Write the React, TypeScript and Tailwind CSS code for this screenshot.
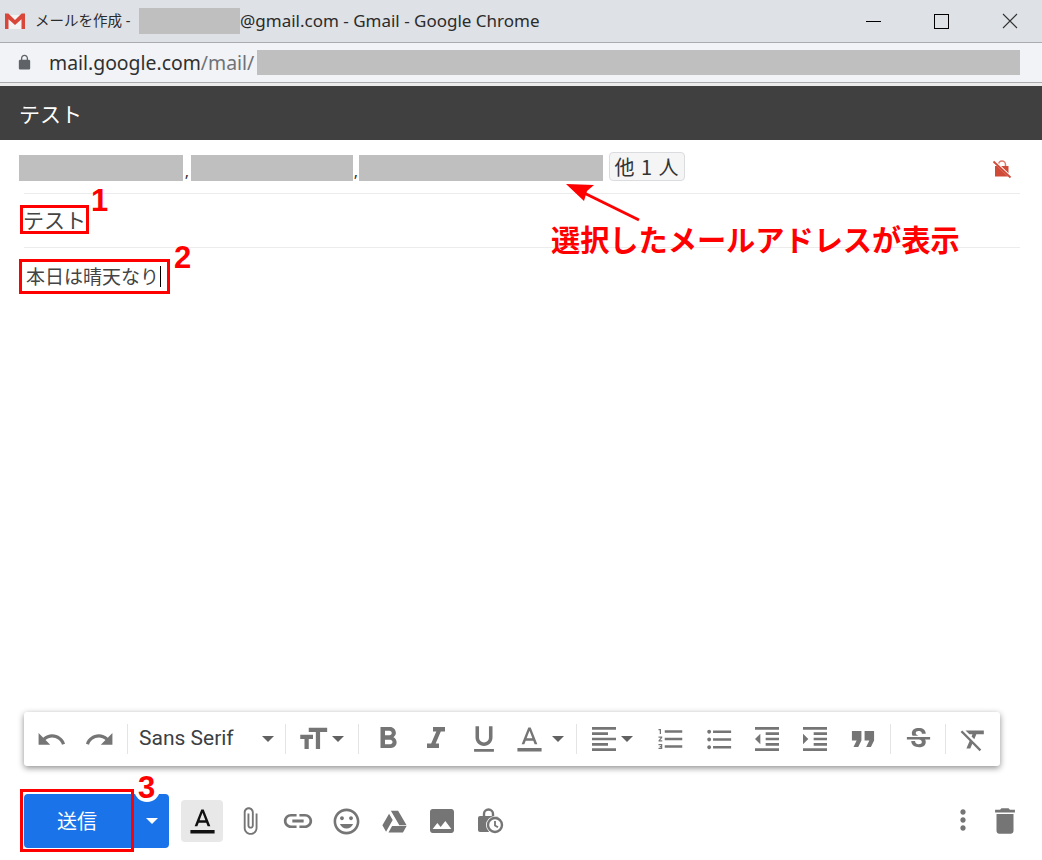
const ui = '"Noto Sans", "Noto Sans CJK JP", sans-serif'
const jp = '"Noto Sans CJK JP", sans-serif'

const paths = {
  undo: 'M12.5 8c-2.65 0-5.05.99-6.9 2.6L2 7v9h9l-3.62-3.62c1.39-1.16 3.16-1.88 5.12-1.88 3.54 0 6.55 2.31 7.6 5.5l2.37-.78C21.08 11.03 17.15 8 12.5 8z',
  redo: 'M18.4 10.6C16.55 8.99 14.15 8 11.5 8c-4.65 0-8.58 3.03-9.96 7.22L3.9 16c1.05-3.19 4.05-5.5 7.6-5.5 1.95 0 3.73.72 5.12 1.88L13 16h9V7l-3.6 3.6z',
  size: 'M9 4v3h5v12h3V7h5V4H9zm-6 8h3v7h3v-7h3V9H3v3z',
  bold: 'M15.6 10.79c.97-.67 1.65-1.77 1.65-2.79 0-2.26-1.75-4-4-4H7v14h7.04c2.09 0 3.71-1.7 3.71-3.79 0-1.52-.86-2.82-2.15-3.42zM10 6.5h3c.83 0 1.5.67 1.5 1.5s-.67 1.5-1.5 1.5h-3v-3zm3.5 9H10v-3h3.5c.83 0 1.5.67 1.5 1.5s-.67 1.5-1.5 1.5z',
  italic: 'M10 4v3h2.21l-3.42 8H6v3h8v-3h-2.21l3.42-8H18V4z',
  underline: 'M12 17c3.31 0 6-2.69 6-6V3h-2.5v8c0 1.93-1.57 3.5-3.5 3.5S8.5 12.93 8.5 11V3H6v8c0 3.31 2.69 6 6 6zm-7 2v2h14v-2H5z',
  color: 'M11 2L5.500 16h2.250l1.120-3h6.250l1.120 3h2.250L13 2h-2zm-1.380 9L12 4.670 14.380 11H9.620zM2 19h20v3H2z',
  align: 'M15 15H3v2h12v-2zm0-8H3v2h12V7zM3 13h18v-2H3v2zm0 8h18v-2H3v2zM3 3v2h18V3H3z',
  numbered: 'M2 17h2v.5H3v1h1v.5H2v1h3v-4H2v1zm1-9h1V4H2v1h1v3zm-1 3h1.8L2 13.1v.9h3v-1H3.2L5 10.9V10H2v1zm5-6v2h14V5H7zm0 14h14v-2H7v2zm0-6h14v-2H7v2z',
  bulleted: 'M4 10.5c-.83 0-1.5.67-1.5 1.5s.67 1.5 1.5 1.5 1.5-.67 1.5-1.5-.67-1.5-1.5-1.5zm0-6c-.83 0-1.5.67-1.5 1.5S3.17 7.5 4 7.5 5.5 6.83 5.5 6 4.83 4.5 4 4.5zm0 12c-.83 0-1.5.68-1.5 1.5s.68 1.5 1.5 1.5 1.5-.68 1.5-1.5-.67-1.5-1.5-1.5zM7 19h14v-2H7v2zm0-6h14v-2H7v2zm0-8v2h14V5H7z',
  outdent: 'M11 17h10v-2H11v2zm-8-5l4 4V8l-4 4zm0 9h18v-2H3v2zM3 3v2h18V3H3zm8 6h10V7H11v2zm0 4h10v-2H11v2z',
  indent: 'M3 21h18v-2H3v2zM3 8v8l4-4-4-4zm8 9h10v-2H11v2zM3 3v2h18V3H3zm8 6h10V7H11v2zm0 4h10v-2H11v2z',
  quote: 'M6 17h3l2-4V7H5v6h3zm8 0h3l2-4V7h-6v6h3z',
  strike: 'M7.24 8.75c-.26-.48-.39-1.03-.39-1.67 0-.61.13-1.16.4-1.67.26-.5.63-.93 1.11-1.29.48-.35 1.05-.63 1.7-.83.66-.19 1.39-.29 2.18-.29.81 0 1.54.11 2.21.34.66.22 1.23.54 1.69.94.47.4.83.88 1.08 1.43.25.55.38 1.15.38 1.81h-3.01c0-.31-.05-.59-.15-.85-.09-.27-.24-.49-.44-.68-.2-.19-.45-.33-.75-.44-.3-.1-.66-.16-1.06-.16-.39 0-.74.04-1.03.13-.29.09-.53.21-.72.36-.19.16-.34.34-.44.55-.1.21-.15.43-.15.66 0 .48.25.88.74 1.21.38.25.77.48 1.41.7H7.39c-.05-.08-.11-.17-.15-.25zM21 12v-2H3v2h9.62c.18.07.4.14.55.2.37.17.66.34.87.51.21.17.35.36.43.57.07.2.11.43.11.69 0 .23-.05.45-.14.66-.09.2-.23.38-.42.53-.19.15-.42.26-.71.35-.29.08-.63.13-1.01.13-.43 0-.83-.04-1.18-.13s-.66-.23-.91-.42c-.25-.19-.45-.44-.59-.75-.14-.31-.25-.76-.25-1.21H6.4c0 .55.08 1.13.24 1.58.16.45.37.85.65 1.21.28.35.6.66.98.92.37.26.78.48 1.22.65.44.17.9.3 1.38.39.48.08.96.13 1.44.13.8 0 1.53-.09 2.18-.28s1.21-.45 1.67-.79c.46-.34.82-.77 1.07-1.27s.38-1.07.38-1.71c0-.6-.1-1.14-.31-1.61-.05-.11-.11-.23-.17-.33H21z',
  clear: 'M3.27 5L2 6.27l6.97 6.97L6.5 19h3l1.57-3.66L16.73 21 18 19.73 3.55 5.27 3.27 5zM6 5v.18L8.82 8h2.4l-.72 1.68 2.1 2.1L14.21 8H20V5H6z',
  clip: 'M16.5 6v11.5c0 2.21-1.79 4-4 4s-4-1.79-4-4V5c0-1.38 1.12-2.5 2.5-2.5s2.5 1.12 2.5 2.5v10.5c0 .55-.45 1-1 1s-1-.45-1-1V6H10v9.5c0 1.38 1.12 2.5 2.5 2.5s2.5-1.12 2.5-2.5V5c0-2.21-1.79-4-4-4S7 2.79 7 5v12.5c0 3.04 2.46 5.5 5.5 5.5s5.5-2.46 5.5-5.5V6h-1.5z',
  link: 'M3.9 12c0-1.71 1.39-3.1 3.1-3.1h4V7H7c-2.76 0-5 2.24-5 5s2.24 5 5 5h4v-1.9H7c-1.71 0-3.1-1.39-3.1-3.1zM8 13h8v-2H8v2zm9-6h-4v1.9h4c1.71 0 3.1 1.39 3.1 3.1s-1.39 3.1-3.1 3.1h-4V17h4c2.76 0 5-2.24 5-5s-2.24-5-5-5z',
  emoji: 'M11.99 2C6.47 2 2 6.48 2 12s4.47 10 9.99 10C17.52 22 22 17.52 22 12S17.52 2 11.99 2zM12 20c-4.42 0-8-3.58-8-8s3.58-8 8-8 8 3.58 8 8-3.58 8-8 8zm3.5-9c.83 0 1.5-.67 1.5-1.5S16.33 8 15.5 8 14 8.67 14 9.5s.67 1.5 1.5 1.5zm-7 0c.83 0 1.5-.67 1.5-1.5S9.33 8 8.5 8 7 8.67 7 9.5 7.67 11 8.5 11zm3.5 6.5c2.33 0 4.31-1.46 5.11-3.5H6.89c.8 2.04 2.78 3.5 5.11 3.5z',
  drive: 'M9 3h6l7 12h-6L9 3zM7.500 5.500l3 5.200L5 20.500 2 15l5.500-9.500zM7 21l3-5.300h12L19 21H7z',
  image: 'M21 19V5c0-1.1-.9-2-2-2H5c-1.1 0-2 .9-2 2v14c0 1.1.9 2 2 2h14c1.1 0 2-.9 2-2zM8.5 13.5l2.5 3.01L14.5 12l4.5 6H5l3.5-4.5z',
  more: 'M12 8c1.1 0 2-.9 2-2s-.9-2-2-2-2 .9-2 2 .9 2 2 2zm0 2c-1.1 0-2 .9-2 2s.9 2 2 2 2-.9 2-2-.9-2-2-2zm0 6c-1.1 0-2 .9-2 2s.9 2 2 2 2-.9 2-2-.9-2-2-2z',
  trash: 'M6 19c0 1.1.9 2 2 2h8c1.1 0 2-.9 2-2V7H6v12zM19 4h-3.5l-1-1h-5l-1 1H5v2h14V4z',
}

function Icon({ d, size = 24, className = 'fill-[#757575]' }: { d: string; size?: number; className?: string }) {
  return (
    <svg width={size} height={size} viewBox="0 0 24 24" className={`shrink-0 ${className}`}>
      <path d={d} />
    </svg>
  )
}

function Tool({ d, size = 26 }: { d: string; size?: number }) {
  return (
    <div className="flex h-12 w-12 shrink-0 items-center justify-center">
      <Icon d={d} size={size} />
    </div>
  )
}

function Caret({ className = 'border-t-[#616161]' }: { className?: string }) {
  return <div className={`h-0 w-0 border-x-[6px] border-t-[6px] border-x-transparent ${className}`} />
}

function Sep() {
  return <div className="h-[30px] w-px shrink-0 bg-[#e4e4e4]" />
}

function Redacted({ className }: { className: string }) {
  return <div className={`shrink-0 bg-[#bfbfbf] ${className}`} />
}

function GmailLogo() {
  return (
    <svg width="22" height="18" viewBox="0 0 22 18" className="-ml-[1px] shrink-0">
      <path d="M3 3h16v14H3z" fill="#f4f4f4" />
      <path d="M1 1.500h3.400L11 8l6.600-6.500H21V17h-3.500V7.200L11 13 4.500 7.200V17H1z" fill="#d9473a" />
    </svg>
  )
}

function TitleBar() {
  return (
    <div className="flex h-[43px] shrink-0 items-center border-b border-[#a9abad] bg-[#dee1e6] pl-[5px] text-[17px] text-[#2b2b2b]" style={{ fontFamily: ui }}>
      <GmailLogo />
      <span className="ml-[9px] w-[104px] shrink-0 whitespace-nowrap text-[14.5px]">メールを作成 -</span>
      <Redacted className="h-[26px] w-[101px]" />
      <span className="whitespace-nowrap">@gmail.com - Gmail - Google Chrome</span>
      <div className="ml-auto flex items-center pr-[24px]">
        <div className="h-px w-[15px] bg-black" />
        <div className="ml-[53px] h-[15px] w-[15px] border border-black" />
        <svg width="16" height="16" viewBox="0 0 16 16" className="ml-[53px] stroke-[#333333]">
          <path d="M1 1l14 14M15 1L1 15" fill="none" strokeWidth="1.100" />
        </svg>
      </div>
    </div>
  )
}

function AddressBar() {
  return (
    <div className="flex h-[40px] shrink-0 items-center border-b border-[#a9abad] bg-[#f1f3f6] pl-[16px] pr-[22px] text-[#303030]" style={{ fontFamily: ui }}>
      <Icon d="M18 8h-1V6c0-2.760-2.240-5-5-5S7 3.240 7 6v2H6c-1.100 0-2 .9-2 2v10c0 1.100.9 2 2 2h12c1.100 0 2-.9 2-2V10c0-1.100-.9-2-2-2zm-2.900 0H8.900V6c0-1.710 1.390-3.100 3.100-3.100 1.710 0 3.100 1.390 3.100 3.100v2z" size={17} className="fill-[#5f6368]" />
      <span className="ml-[16px] whitespace-nowrap text-[19.400px]">
        mail.google.com<span className="text-[#6f7276]">/mail/</span>
      </span>
      <Redacted className="ml-auto h-[25px] w-[763px]" />
    </div>
  )
}

function Recipients() {
  return (
    <div className="flex items-end pl-[19px] pr-[30px] pt-[12px] text-[#333333]" style={{ fontFamily: ui }}>
      <Redacted className="h-[26px] w-[164px]" />
      <span className="w-[8px] text-center text-[16px] leading-[20px]">,</span>
      <Redacted className="h-[26px] w-[162px]" />
      <span className="w-[6px] text-center text-[16px] leading-[20px]">,</span>
      <Redacted className="h-[26px] w-[244px]" />
      <div className="ml-[6px] flex h-[29px] w-[76px] items-center justify-center whitespace-nowrap rounded-[4px] border border-[#dadce0] bg-[#f5f5f5] text-[20px] tracking-[1px] text-[#333333]" style={{ fontFamily: jp }}>
        他 1 人
      </div>
      <div className="ml-auto mb-[2px]">
        <svg width="20" height="20" viewBox="0 0 20 20">
          <path d="M6.500 7V5.500a3.500 3.500 0 0 1 7 0V7" fill="none" stroke="#e0796c" strokeWidth="1.500" />
          <path d="M3 7h13.500v10.500H3z" fill="#d04a38" />
          <path d="M2.500 2.500l16 15.500" stroke="#ffffff" strokeWidth="2.800" />
          <path d="M1.500 2.500l17 16" stroke="#d04a38" strokeWidth="1.800" />
        </svg>
      </div>
    </div>
  )
}

function Toolbar() {
  return (
    <div className="mx-[24px] flex h-[54px] w-[976px] shrink-0 items-center rounded-[3px] bg-white pl-[3px] shadow-[0_2px_6px_rgba(0,0,0,0.45)]">
      <Tool d={paths.undo} size={31} />
      <Tool d={paths.redo} size={31} />
      <div className="ml-[4px]"><Sep /></div>
      <div className="flex w-[157px] shrink-0 items-center pl-[11px] pr-[11px] text-[21px] text-[#3c4043]" style={{ fontFamily: 'Roboto, sans-serif' }}>
        Sans Serif
        <div className="ml-auto"><Caret /></div>
      </div>
      <Sep />
      <div className="flex w-[72px] shrink-0 items-center pl-[10px]">
        <Icon d={paths.size} size={34} />
        <div className="ml-[2px]"><Caret /></div>
      </div>
      <Sep />
      <div className="ml-[5px] flex">
        <Tool d={paths.bold} size={36} />
        <Tool d={paths.italic} size={36} />
        <Tool d={paths.underline} size={34} />
      </div>
      <div className="flex w-[68px] shrink-0 items-center pl-[7px]">
        <Icon d={paths.color} size={29} />
        <div className="ml-[8px]"><Caret /></div>
      </div>
      <Sep />
      <div className="flex w-[70px] shrink-0 items-center pl-[11px]">
        <Icon d={paths.align} size={32} />
        <div className="ml-[1px]"><Caret /></div>
      </div>
      <Tool d={paths.numbered} size={30} />
      <Tool d={paths.bulleted} size={31} />
      <Tool d={paths.outdent} size={32} />
      <Tool d={paths.indent} size={32} />
      <Tool d={paths.quote} size={38} />
      <div className="ml-[3px]"><Sep /></div>
      <div className="ml-[3px]"><Tool d={paths.strike} size={31} /></div>
      <div className="ml-[3px]"><Sep /></div>
      <div className="ml-[3px]"><Tool d={paths.clear} size={31} /></div>
    </div>
  )
}

function LockClock() {
  return (
    <svg width="28" height="28" viewBox="0 0 28 28">
      <path d="M8 9V7a4.500 4.500 0 0 1 9 0v2" fill="none" stroke="#757575" strokeWidth="2.400" />
      <rect x="2" y="9" width="20" height="16" rx="2" fill="#757575" />
      <circle cx="19" cy="18" r="9" fill="#ffffff" />
      <circle cx="19" cy="18" r="7" fill="none" stroke="#757575" strokeWidth="2.400" />
      <path d="M19 14v4.500l3 1.800" fill="none" stroke="#757575" strokeWidth="1.800" />
    </svg>
  )
}

function ActionBar() {
  return (
    <div className="mb-[12px] mt-[28px] flex h-[54px] shrink-0 items-center pl-[24px] pr-[16px]">
      <div className="flex h-[54px] w-[145px] shrink-0 items-center rounded-[4px] bg-[#1a73e8] text-white">
        <div className="flex w-[106px] justify-center text-[20px]" style={{ fontFamily: jp }}>送信</div>
        <div className="flex flex-1 justify-center pl-[5px]"><Caret className="border-t-white" /></div>
      </div>
      <div className="ml-[12px] flex h-[42px] w-[42px] shrink-0 items-center justify-center rounded-[4px] bg-[#e8e8e8]">
        <Icon d={paths.color} size={29} className="fill-[#111111]" />
      </div>
      <div className="ml-[3px] flex">
        <Tool d={paths.clip} size={30} />
        <Tool d={paths.link} size={34} />
        <Tool d={paths.emoji} size={31} />
        <Tool d={paths.drive} size={29} />
        <Tool d={paths.image} size={32} />
        <div className="flex h-12 w-12 items-center justify-center"><LockClock /></div>
      </div>
      <div className="ml-auto flex">
        <div className="flex w-[42px] justify-center"><Icon d={paths.more} size={32} /></div>
        <div className="flex w-[42px] justify-center"><Icon d={paths.trash} size={34} /></div>
      </div>
    </div>
  )
}

function Callouts() {
  return (
    <>
      <span className="absolute left-[91px] top-[184px] text-[31px] font-bold leading-[34px] text-[#ff0000]" style={{ fontFamily: '"Liberation Sans", sans-serif' }}>1</span>
      <span className="absolute left-[174px] top-[241px] text-[31px] font-bold leading-[34px] text-[#ff0000]" style={{ fontFamily: '"Liberation Sans", sans-serif' }}>2</span>
      <div className="absolute left-[134px] top-[776px] h-[26px] w-[26px] rounded-full bg-white" />
      <span className="absolute left-[138px] top-[771px] text-[31px] font-bold leading-[34px] text-[#ff0000]" style={{ fontFamily: '"Liberation Sans", sans-serif' }}>3</span>
      <div className="absolute left-[20px] top-[789px] h-[63px] w-[114px] border-[3px] border-[#ff0000]" />
      <span className="absolute left-[551px] top-[217px] whitespace-nowrap text-[29.200px] font-bold leading-[42px] text-[#ff0000]" style={{ fontFamily: jp }}>選択したメールアドレスが表示</span>
      <svg width="90" height="50" viewBox="0 0 90 50" className="absolute left-[560px] top-[178px]">
        <path d="M79 42L16 11" stroke="#ff0000" strokeWidth="3" fill="none" />
        <path d="M6 6l28 1-7 6-3 10z" fill="#ff0000" />
      </svg>
    </>
  )
}

export default function App() {
  return (
    <div className="relative flex h-[860px] w-[1042px] flex-col overflow-hidden bg-white">
      <TitleBar />
      <AddressBar />
      <div className="h-[3px] shrink-0 bg-[#ececec]" />
      <div className="flex h-[54px] shrink-0 items-center bg-[#404040] pl-[19px] pt-[2px] text-[21px] text-white" style={{ fontFamily: jp }}>
        テスト
      </div>
      <Recipients />
      <div className="mx-[24px] mt-[12px] h-px w-[996px] shrink-0 bg-[#ececec]" />
      <div className="ml-[20px] mt-[11px] flex h-[29px] w-[69px] items-center border-[3px] border-[#ff0000] text-[21px] whitespace-nowrap text-[#444444]" style={{ fontFamily: jp }}>
        テスト
      </div>
      <div className="mx-[24px] mt-[13px] h-px w-[996px] shrink-0 bg-[#ececec]" />
      <div className="ml-[19px] mt-[11px] flex h-[35px] w-[151px] items-center border-[3px] border-[#ff0000] pl-[4px] text-[19px] whitespace-nowrap text-[#444444]" style={{ fontFamily: jp }}>
        本日は晴天なり
        <div className="ml-[1px] h-[21px] w-px bg-black" />
      </div>
      <div className="flex-1" />
      <Toolbar />
      <ActionBar />
      <Callouts />
    </div>
  )
}
